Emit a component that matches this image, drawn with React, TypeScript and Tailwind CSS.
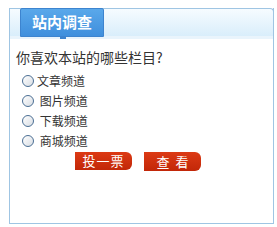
export default function App() {
  const options = ["文章频道", " 图片频道", " 下载频道", " 商城频道"];

  return (
    <div className="h-[227px] w-[277px] bg-white pl-[9px] pt-[8px] font-['Noto_Sans_CJK_SC',sans-serif]">
      <div className="flex h-[216px] w-[265px] flex-col border-x border-b border-[#9fc5e3]">
        {/* header strip */}
        <div className="relative -mx-px h-[28px] rounded-tr-[4px] border-x border-t border-[#9fc5e3] bg-gradient-to-b from-[#f6fbff] to-[#d9eefb]">
          <div className="absolute left-[10px] top-[-1px] flex h-[29px] w-[84px] items-center justify-center rounded-t-[2px] border border-[#3d84cf] bg-gradient-to-b from-[#5aa8ea] to-[#3f8fdd] text-[15px] font-bold text-white">
            站内调查
            <span className="absolute bottom-[-3px] left-[39px] h-[3px] w-[6px] bg-[#3d84cf]" />
          </div>
        </div>
        <div className="h-[3px] bg-[#e9f4fc]" />

        <div className="pt-[8px] text-[#333]">
          <p className="pl-[6px] text-[14px] leading-[20px]">你喜欢本站的哪些栏目?</p>
          <ul className="mt-[4px] pl-[12px] text-[12px]">
            {options.map((o, i) => (
              <li key={i} className="flex h-[20px] items-center">
                <span className="h-[12px] w-[12px] rounded-full border border-[#4b6f94] bg-gradient-to-br from-white to-[#d8dde3]" />
                <span className="ml-[3px] whitespace-pre">{o}</span>
              </li>
            ))}
          </ul>
          <div className="mt-[1px] flex gap-[12px] pl-[65px]">
            <button className="flex h-[18px] w-[57px] items-center justify-center rounded-r-[6px] bg-gradient-to-b from-[#dc3a14] to-[#c22708] text-[13px] tracking-[1px] text-white">
              投一票
            </button>
            <button className="flex h-[19px] w-[57px] items-center justify-center rounded-r-[6px] bg-gradient-to-b from-[#dc3a14] to-[#c22708] text-[13px] text-white">
              查&nbsp;&nbsp;看
            </button>
          </div>
        </div>
      </div>
    </div>
  );
}
